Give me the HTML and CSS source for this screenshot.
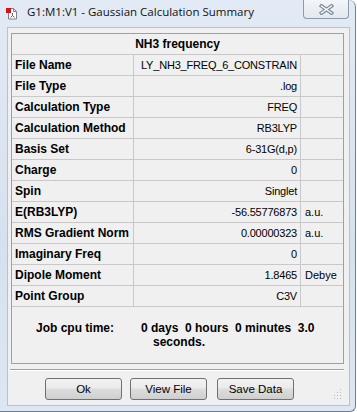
FILE: index.html
```html
<!DOCTYPE html>
<html lang="en">
<head>
<meta charset="UTF-8">
<meta name="viewport" content="width=device-width, initial-scale=1.0">
<title>Gaussian Calculation Summary</title>
<link rel="stylesheet" href="styles.css">
</head>
<body>
<div class="window">
<div class="titlebar">
<svg class="app-icon" width="12" height="13" viewBox="0 0 12 13">
<path d="M2.5 1.5h5l3 3v7.5h-8z" fill="#fff" stroke="#808080"/>
<path d="M7.5 1.5v3h3" fill="none" stroke="#808080"/>
<path d="M6.5 6v2.5M6.5 8.5l-2 2M6.5 8.5l2 2" stroke="#666" fill="none"/>
<rect x="0" y="1" width="5" height="5" fill="#d2121c"/>
</svg>
<span class="title">G1:M1:V1 - Gaussian Calculation Summary</span>
<div class="close-btn">
<svg width="15" height="11" viewBox="0 0 15 11">
<path d="M2.5 2l10 7M12.5 2l-10 7" stroke="#7d8794" stroke-width="3.8" stroke-linecap="square"/>
<path d="M2.5 2l10 7M12.5 2l-10 7" stroke="#f4f6f9" stroke-width="1.5" stroke-linecap="square"/>
</svg>
</div>
</div>
<div class="client">
<div class="panel">
<div class="summary">
<div class="cell head">NH3 frequency</div>
<div class="cell label">File Name</div><div class="cell value">LY_NH3_FREQ_6_CONSTRAIN</div><div class="cell unit"></div>
<div class="cell label">File Type</div><div class="cell value">.log</div><div class="cell unit"></div>
<div class="cell label">Calculation Type</div><div class="cell value">FREQ</div><div class="cell unit"></div>
<div class="cell label">Calculation Method</div><div class="cell value">RB3LYP</div><div class="cell unit"></div>
<div class="cell label">Basis Set</div><div class="cell value">6-31G(d,p)</div><div class="cell unit"></div>
<div class="cell label">Charge</div><div class="cell value">0</div><div class="cell unit"></div>
<div class="cell label">Spin</div><div class="cell value">Singlet</div><div class="cell unit"></div>
<div class="cell label">E(RB3LYP)</div><div class="cell value">-56.55776873</div><div class="cell unit">a.u.</div>
<div class="cell label">RMS Gradient Norm</div><div class="cell value">0.00000323</div><div class="cell unit">a.u.</div>
<div class="cell label">Imaginary Freq</div><div class="cell value">0</div><div class="cell unit"></div>
<div class="cell label">Dipole Moment</div><div class="cell value">1.8465</div><div class="cell unit">Debye</div>
<div class="cell label">Point Group</div><div class="cell value">C3V</div><div class="cell unit"></div>
</div>
<div class="cpu-time">
<span class="cpu-label">Job cpu time:</span>
<div class="cpu-value">
<div class="cpu-line">0 days  0 hours  0 minutes  3.0</div>
<div class="cpu-line indent">seconds.</div>
</div>
</div>
</div>
<div class="separator"></div>
<div class="buttons">
<button type="button" class="btn">Ok</button>
<button type="button" class="btn">View File</button>
<button type="button" class="btn wide-gap">Save Data</button>
<svg class="grip" width="10" height="10" viewBox="0 0 10 10">
<g fill="#b8b8b8">
<rect x="8" y="0" width="1" height="1"/>
<rect x="8" y="3" width="1" height="1"/><rect x="5" y="3" width="1" height="1"/>
<rect x="8" y="6" width="1" height="1"/><rect x="5" y="6" width="1" height="1"/><rect x="2" y="6" width="1" height="1"/>
<rect x="8" y="9" width="1" height="1"/><rect x="5" y="9" width="1" height="1"/><rect x="2" y="9" width="1" height="1"/>
</g>
</svg>
</div>
</div>
</div>
</body>
</html>
```

FILE: styles.css
```css
body {
    margin: 0;
    font-family: "Liberation Sans", Arial, sans-serif;
    background: #ffffff;
}
.window {
    width: 355px;
    height: 411px;
    border-right: 1px solid #6f7f93;
    border-bottom: 1px solid #6f7f93;
    border-top-right-radius: 7px;
    border-bottom-right-radius: 6px;
    background: linear-gradient(#e2eaf5, #d6e1ef 60%, #dde7f3);
    display: flex;
    flex-direction: column;
}
.titlebar {
    height: 27px;
    display: flex;
    align-items: flex-start;
}
.app-icon {
    margin: 7px 0 0 6px;
}
.title {
    margin: 4px 0 0 9px;
    font-family: "Open Sans", sans-serif;
    font-size: 11.5px;
    color: #111;
}
.close-btn {
    margin-left: auto;
    margin-right: 6px;
    width: 44px;
    height: 18px;
    border: 1px solid #8e9aa9;
    border-top: none;
    border-radius: 0 0 4px 4px;
    background: linear-gradient(#f3f6fa, #e3e9f1);
    display: flex;
    align-items: center;
    justify-content: center;
}
.client {
    margin-left: 7px;
    width: 341px;
    height: 377px;
    border: 1px solid #b4c2d3;
    background: #f0f0f0;
}
.panel {
    margin: 5px 0 0 3px;
    width: 331px;
    border: 1px solid #a0a0a0;
}
.summary {
    display: grid;
    grid-template-columns: 122px 167px 42px;
    grid-auto-rows: 21px;
}
.cell {
    box-sizing: border-box;
    border-bottom: 1px solid #c8c8c8;
    border-right: 1px solid #c8c8c8;
    line-height: 20px;
    font-size: 11px;
    white-space: nowrap;
    overflow: hidden;
}
.head {
    grid-column: 1 / 4;
    border-right: none;
    text-align: center;
    font-weight: bold;
    font-size: 12px;
}
.label {
    padding-left: 3px;
    font-weight: bold;
    font-size: 12px;
}
.value {
    text-align: right;
    padding-right: 3px;
    letter-spacing: -0.2px;
}
.unit {
    border-right: none;
    padding-left: 4px;
}
.cpu-time {
    height: 56px;
    box-sizing: border-box;
    padding: 14px 0 0 24px;
    display: flex;
    font-size: 12px;
    font-weight: bold;
    line-height: 14px;
}
.cpu-label {
    width: 105px;
}
.cpu-line {
    white-space: pre;
}
.indent {
    padding-left: 12px;
}
.separator {
    margin: 5px 5px 0 2px;
    height: 1px;
    background: #a0a0a0;
    border-bottom: 1px solid #ffffff;
}
.buttons {
    display: flex;
    align-items: flex-start;
    padding: 7px 0 0 37px;
    gap: 8px;
}
.btn {
    width: 77px;
    height: 22px;
    padding: 0;
    border: 1px solid #707070;
    border-radius: 3px;
    background: linear-gradient(#f2f2f2 0%, #ebebeb 45%, #dddddd 50%, #cfcfcf 100%);
    font-family: "Liberation Sans", Arial, sans-serif;
    font-size: 11.5px;
    color: #000;
}
.wide-gap {
    margin-left: 2px;
}
.grip {
    margin: 11px 0 0 auto;
    margin-right: 7px;
}
```
